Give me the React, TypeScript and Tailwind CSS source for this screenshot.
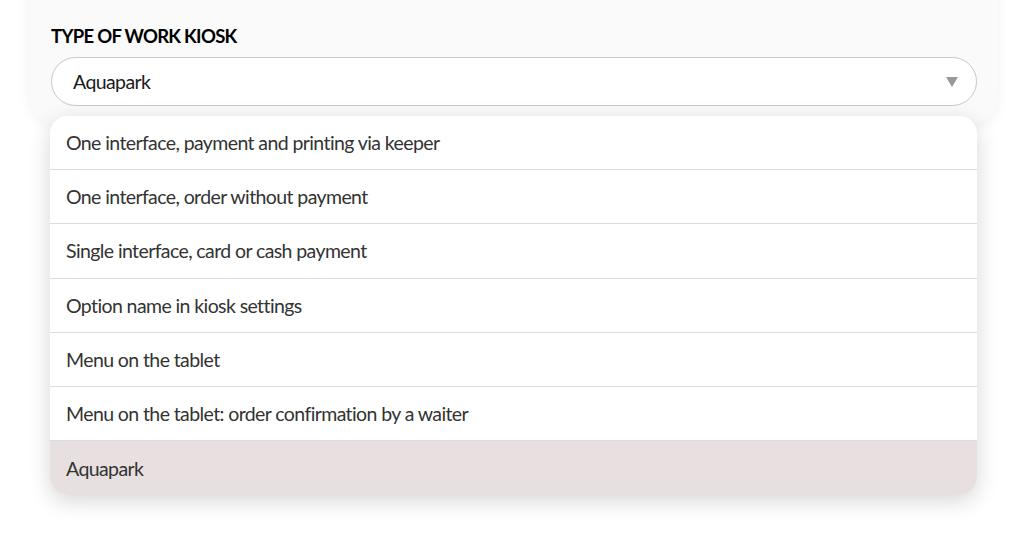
const options = [
  'One interface, payment and printing via keeper',
  'One interface, order without payment',
  'Single interface, card or cash payment',
  'Option name in kiosk settings',
  'Menu on the tablet',
  'Menu on the tablet: order confirmation by a waiter',
  'Aquapark',
];

const font = {
  fontFamily: 'Lato, "Liberation Sans", sans-serif',
};

export default function App() {
  const selected = 'Aquapark';

  return (
    <div className="relative h-[552px] w-[1022px] overflow-hidden bg-white" style={font}>
      <div className="ml-[30px] mr-[24px] -mt-[20px] rounded-b-[28px] bg-[#fafafa] px-[21px] pb-[19px] pt-[46px] shadow-[0_2px_14px_rgba(0,0,0,0.06)]">
        <div className="text-[18.5px] font-bold leading-[21px] tracking-[-0.7px] text-black">TYPE OF WORK KIOSK</div>
        <div className="mt-[10px] flex h-[49px] items-center justify-between rounded-full border border-[#c8c8c8] bg-white pl-[21px] pr-[18px]">
          <span className="text-[19.5px] tracking-[-0.6px] text-[#1a1a1a]">{selected}</span>
          <svg width="12" height="10" viewBox="0 0 12 10" className="mt-[1px]">
            <path d="M0 0 H12 L6 10 Z" fill="#999" />
          </svg>
        </div>
      </div>

      <ul className="absolute left-[50px] top-[116px] w-[927px] overflow-hidden rounded-[18px] bg-white shadow-[0_6px_22px_rgba(0,0,0,0.16)]">
        {options.map((opt, i) => (
          <li
            key={opt}
            className={
              'flex h-[54.2px] items-center px-[16px] text-[19.5px] tracking-[-0.6px] text-[#333] ' +
              (i < options.length - 1 ? 'border-b border-[#dcdcdc] ' : '') +
              (opt === selected ? 'bg-[#e7dfe0]' : 'bg-white')
            }
          >
            {opt}
          </li>
        ))}
      </ul>
    </div>
  );
}
